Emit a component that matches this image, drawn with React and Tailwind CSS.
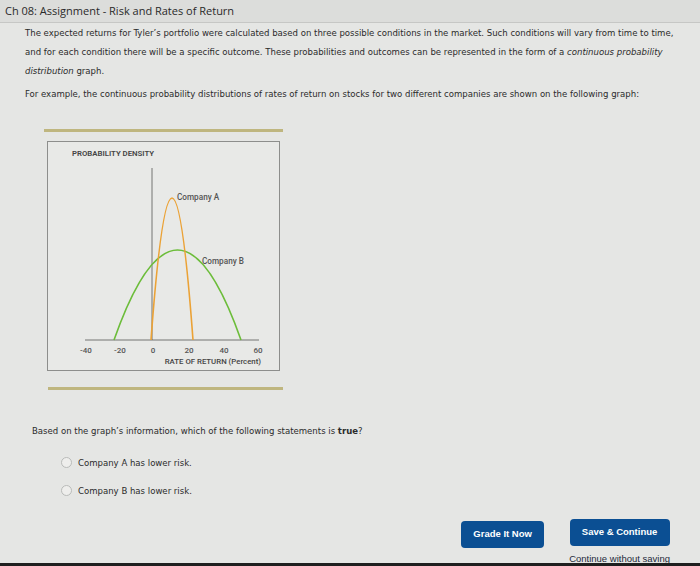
import React from 'react';

const body = { fontFamily: '"DejaVu Sans Condensed", "DejaVu Sans", sans-serif', fontStretch: 'condensed' };

function Chart() {
  return (
    <svg width="234" height="228" viewBox="0 0 234 228" className="block" style={{ fontStretch: 'normal', fontFamily: 'Roboto, sans-serif' }}>
      <text x="24" y="14" fontSize="7.8" fontWeight="600" fill="#444">PROBABILITY DENSITY</text>
      <line x1="104" y1="26" x2="104" y2="198" stroke="#555" strokeWidth="0.8" />
      <line x1="37" y1="198" x2="211" y2="198" stroke="#555" strokeWidth="0.8" />
      <path d="M66 198 Q129.5 18 193 198" fill="none" stroke="#6cbd3a" strokeWidth="1.6" />
      <path d="M103 198 Q124 -86 145 198" fill="none" stroke="#eba236" strokeWidth="1.6" />
      <text x="129" y="58" fontSize="8.2" fontWeight="500" fill="#555">Company A</text>
      <text x="154" y="122" fontSize="8.2" fontWeight="500" fill="#555">Company B</text>
      <g fontSize="8" fontWeight="500" fill="#555" textAnchor="middle">
        <text x="38" y="211">-40</text>
        <text x="72" y="211">-20</text>
        <text x="105" y="211">0</text>
        <text x="141" y="211">20</text>
        <text x="176" y="211">40</text>
        <text x="210" y="211">60</text>
      </g>
      <text x="213" y="222" fontSize="7.8" fill="#444" fontWeight="500" textAnchor="end">RATE OF RETURN (Percent)</text>
    </svg>
  );
}

function Radio({ label }) {
  return (
    <div className="flex items-center h-[19px]">
      <span className="w-[11px] h-[11px] rounded-full border border-[#b9bbb9] bg-[#eeeeec] ml-[61px]" />
      <span className="ml-[6px] text-[9.5px] text-[#2b2b2b]">{label}</span>
    </div>
  );
}

export default function App() {
  return (
    <div className="w-[700px] h-[566px] bg-[#e5e6e4] relative overflow-hidden flex flex-col">
      <div className="h-[24px] bg-[#dcdddb] border-b border-[#c6c7c5] flex items-center pl-[5px]">
        <h1 className="text-[11px] text-[#2a2a2a]" style={{ fontFamily: '"Open Sans", sans-serif' }}>
          Ch 08: Assignment - Risk and Rates of Return
        </h1>
      </div>

      <div className="pl-[25px] text-[9.5px] text-[#2b2b2b] leading-[19px] whitespace-nowrap" style={body}>
        <p>
          The expected returns for Tyler’s portfolio were calculated based on three possible conditions in the market. Such conditions will vary from time to time,
          <br />
          and for each condition there will be a specific outcome. These probabilities and outcomes can be represented in the form of a <i>continuous probability</i>
          <br />
          <i>distribution</i> graph.
        </p>
        <p className="mt-[4px]">
          For example, the continuous probability distributions of rates of return on stocks for two different companies are shown on the following graph:
        </p>

        <div className="w-[239px] ml-[19px] mt-[26px]">
          <div className="h-[3px] bg-[#bfb67f]" />
          <div className="mt-[9px] mx-[3px] border border-[#8d8e8c] bg-[#e8e9e7]">
            <Chart />
          </div>
          <div className="mt-[16px] h-[3px] bg-[#bfb67f] ml-[4px]" />
        </div>

        <p className="mt-[31px] ml-[7px]">
          Based on the graph’s information, which of the following statements is <b>true</b>?
        </p>
        <div className="mt-[13px] -ml-[25px]" >
          <Radio label="Company A has lower risk." />
          <div className="h-[9px]" />
          <Radio label="Company B has lower risk." />
        </div>
      </div>

      <div className="flex justify-end items-start gap-[25px] pr-[30px] mt-[19px]" style={{ fontFamily: '"Liberation Sans", Arial, sans-serif' }}>
        <button className="mt-[2px] w-[83px] h-[27px] rounded-[4px] bg-[#0b4f93] text-white font-bold text-[9.5px]">
          Grade It Now
        </button>
        <div className="flex flex-col items-center">
          <button className="w-[100px] h-[27px] rounded-[4px] bg-[#0b4f93] text-white font-bold text-[9.5px]">
            Save &amp; Continue
          </button>
          <span className="mt-[6px] text-[9.5px] text-[#1e2a3a]">Continue without saving</span>
        </div>
      </div>

      <div className="absolute bottom-0 left-0 right-0 h-[3px] bg-[#1f1f1f]" />
    </div>
  );
}
